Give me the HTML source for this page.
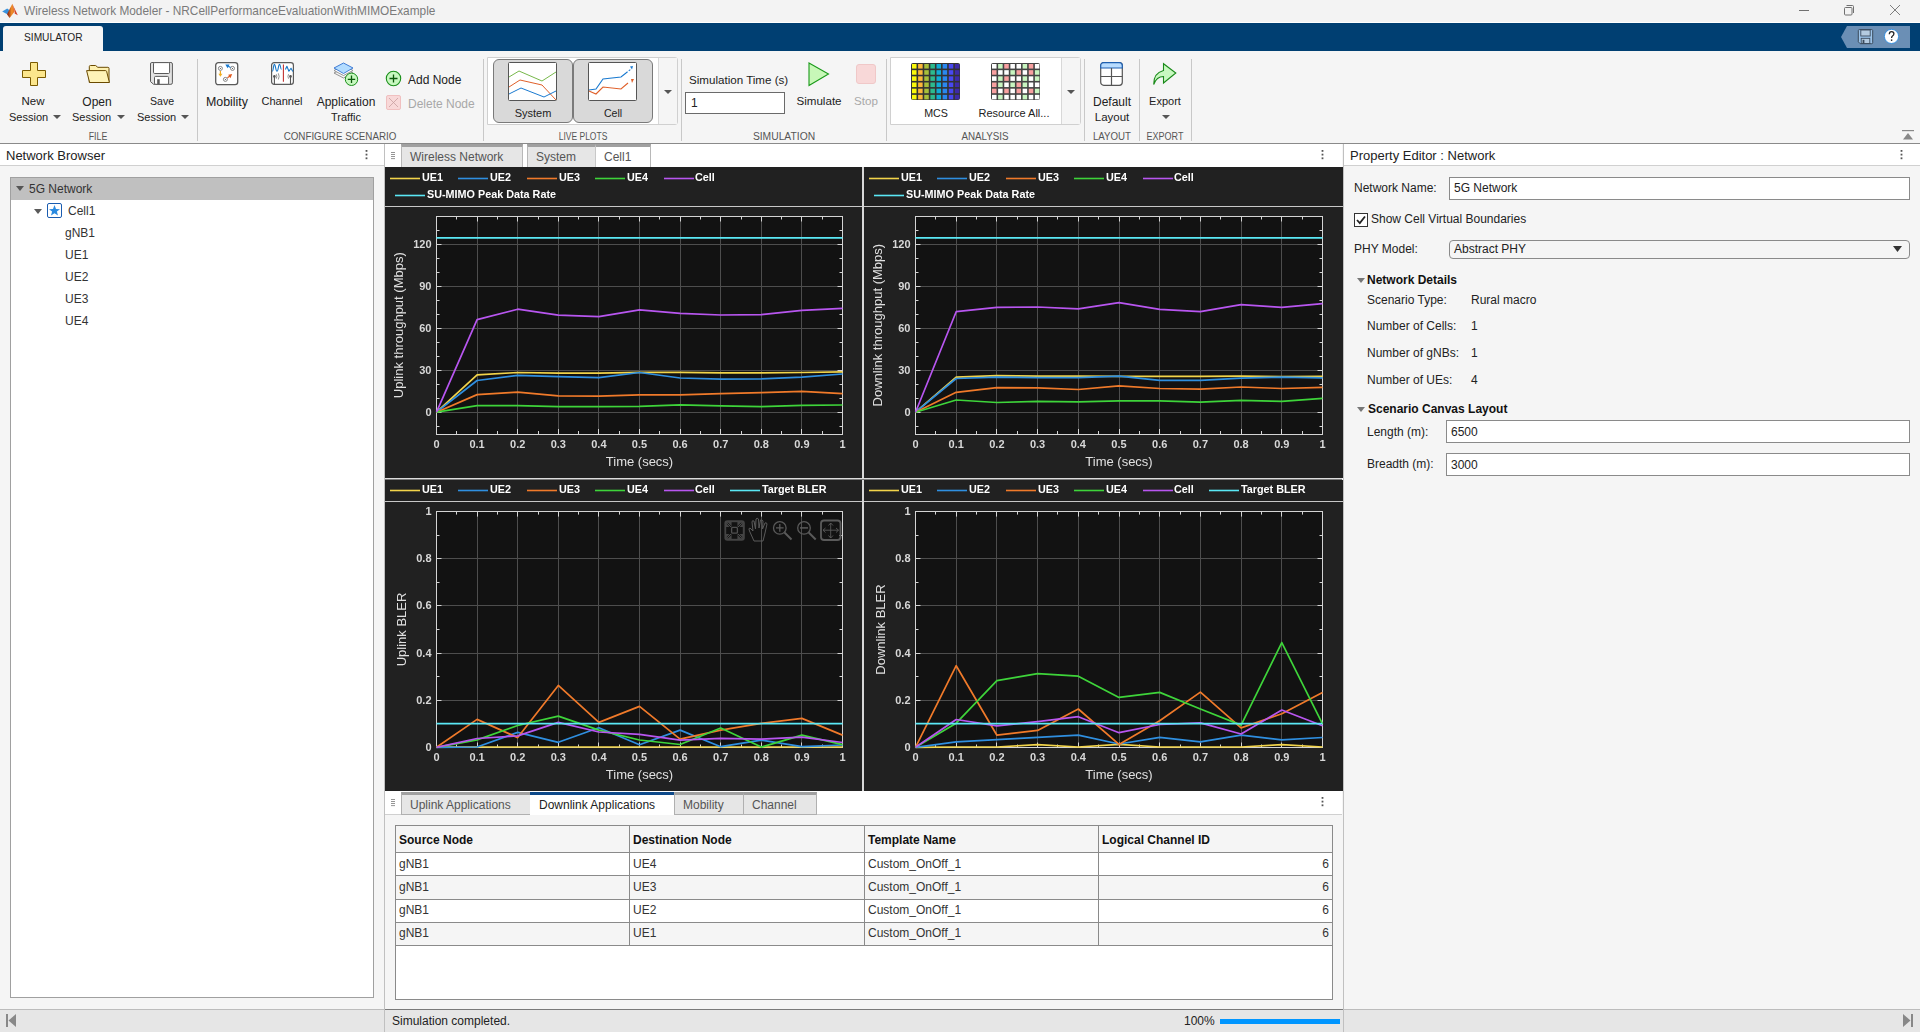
<!DOCTYPE html><html><head><meta charset="utf-8"><title>Wireless Network Modeler</title><style>
*{margin:0;padding:0;box-sizing:border-box}
html,body{width:1920px;height:1032px;overflow:hidden;background:#f5f5f5;font-family:"Liberation Sans",sans-serif}
.t{position:absolute;white-space:nowrap;line-height:1}
.b{position:absolute}
svg{position:absolute;overflow:visible}
</style></head><body>
<div class="b" style="left:0px;top:0px;width:1920px;height:23px;background:#f3f3f3"></div>
<div class="b" style="left:0px;top:22px;width:1920px;height:1px;background:#ffffff"></div>
<svg style="left:0px;top:0px" width="22" height="22" viewBox="0 0 22 22">
<defs><linearGradient id="lg1" x1="0" y1="0" x2="1" y2="0"><stop offset="0" stop-color="#7a1410"/><stop offset="0.6" stop-color="#f0902a"/><stop offset="1" stop-color="#e06a28"/></linearGradient></defs>
<path d="M2.2 11.6 L7.2 8.6 L9.8 10.5 L7.2 14.2 Z" fill="#3a92dc"/>
<path d="M7 14.2 L12.3 3.8 L14.9 11.2 L9.6 18 Z" fill="url(#lg1)"/>
<path d="M12.3 3.8 L17.8 15.2 L14.6 13.4 L14.9 11.2 Z" fill="#d2402a"/>
</svg>
<div class="t " style="left:24px;top:6px;font-size:11.85px;color:#7a7a7a;font-weight:normal;">Wireless Network Modeler - NRCellPerformanceEvaluationWithMIMOExample</div>
<div class="b" style="left:1799px;top:10px;width:10px;height:1px;background:#707070"></div>
<svg style="left:1843px;top:4px" width="12" height="12" viewBox="0 0 12 12"><rect x="1.5" y="3.5" width="7.5" height="7.5" rx="1" fill="none" stroke="#707070"/><path d="M3.5 1.5 H9.5 Q10.5 1.5 10.5 2.5 V9" fill="none" stroke="#707070"/></svg>
<svg style="left:1889px;top:4px" width="12" height="12" viewBox="0 0 12 12"><path d="M1 1 L11 11 M11 1 L1 11" stroke="#707070" stroke-width="0.9"/></svg>
<div class="b" style="left:0px;top:23px;width:1920px;height:28px;background:#003f72"></div>
<div class="b" style="left:3px;top:26px;width:100px;height:25px;background:#f5f5f5;border-radius:3px 3px 0 0"></div>
<div class="t " style="left:24px;top:33px;font-size:10.2px;color:#222;font-weight:normal;">SIMULATOR</div>
<svg style="left:1840px;top:26px" width="72" height="22" viewBox="0 0 72 22">
<path d="M7 0 H70 V22 H7 L1 11 Z" fill="#6b8fb5"/>
<path d="M19.3 3.6 H31.7 Q32.7 3.6 32.7 4.6 V16.7 Q32.7 17.7 31.7 17.7 H20.2 L18.3 15.8 V4.6 Q18.3 3.6 19.3 3.6 Z" fill="#9cc4ea" stroke="#3a4a5c" stroke-width="1"/>
<rect x="20.8" y="4" width="9.4" height="6" fill="#b4cbe0" stroke="#3a4a5c" stroke-width="0.9"/>
<rect x="21.2" y="12.3" width="8.6" height="5.2" fill="#b4cbe0" stroke="#3a4a5c" stroke-width="0.9"/>
<rect x="22.6" y="13.8" width="1.8" height="3.6" fill="#3a4a5c"/>
<circle cx="51.5" cy="10.4" r="7.1" fill="#fff" stroke="#2a8ae0" stroke-width="0.9"/>
<path d="M49.3 8.3 Q49.3 5.6 51.6 5.6 Q53.9 5.6 53.9 7.8 Q53.9 9.2 52.5 10 Q51.6 10.6 51.6 12" fill="none" stroke="#222" stroke-width="1.3"/>
<rect x="50.9" y="13.4" width="1.4" height="1.5" fill="#222"/>
</svg>
<div class="b" style="left:0px;top:51px;width:1920px;height:92px;background:#f5f5f5"></div>
<div class="b" style="left:0px;top:143px;width:1920px;height:1px;background:#8a8a8a"></div>
<div class="b" style="left:197px;top:59px;width:1px;height:82px;background:#c8c8c8"></div>
<div class="b" style="left:483px;top:59px;width:1px;height:82px;background:#c8c8c8"></div>
<div class="b" style="left:681px;top:59px;width:1px;height:82px;background:#c8c8c8"></div>
<div class="b" style="left:886px;top:59px;width:1px;height:82px;background:#c8c8c8"></div>
<div class="b" style="left:1084px;top:59px;width:1px;height:82px;background:#c8c8c8"></div>
<div class="b" style="left:1139px;top:59px;width:1px;height:82px;background:#c8c8c8"></div>
<div class="b" style="left:1191px;top:59px;width:1px;height:82px;background:#c8c8c8"></div>
<svg style="left:22px;top:62px" width="24" height="24" viewBox="0 0 24 24">
<path d="M8.5 0.5 H15.5 V8.5 H23.5 V15.5 H15.5 V23.5 H8.5 V15.5 H0.5 V8.5 H8.5 Z" fill="#fce68c" stroke="#7a5a00" stroke-width="1" stroke-linejoin="round"/>
</svg>
<div class="t" style="left:-167px;width:400px;text-align:center;top:96px;font-size:11.5px;color:#222">New</div>
<div class="t " style="left:9px;top:112px;font-size:11px;color:#222;font-weight:normal;">Session</div>
<svg style="left:53px;top:115px" width="8" height="4" viewBox="0 0 8 4"><path d="M0 0 H8 L4.0 4 Z" fill="#555"/></svg>
<svg style="left:86px;top:64px" width="25" height="20" viewBox="0 0 25 20">
<path d="M3.3 6.5 V2.6 Q3.3 1.5 4.4 1.5 H9.6 L11.8 3.3 H21.9 Q23 3.3 23 4.4 V18.5 H3.3 Z" fill="#fdf0b0" stroke="#6a4a00" stroke-width="1"/>
<path d="M0.6 6.6 H19.6 Q20.4 6.6 20.7 7.6 L23.4 18.5 H3.6 Z" fill="#fef3b8" stroke="#6a4a00" stroke-width="1" stroke-linejoin="round"/>
</svg>
<div class="t" style="left:-103px;width:400px;text-align:center;top:96px;font-size:12px;color:#222">Open</div>
<div class="t " style="left:72px;top:112px;font-size:11px;color:#222;font-weight:normal;">Session</div>
<svg style="left:117px;top:115px" width="8" height="4" viewBox="0 0 8 4"><path d="M0 0 H8 L4.0 4 Z" fill="#555"/></svg>
<svg style="left:150px;top:62px" width="24" height="24" viewBox="0 0 24 24">
<path d="M1.8 0.5 H20.9 Q22.4 0.5 22.4 2 V20.8 Q22.4 22.3 20.9 22.3 H3.6 L0.5 19.6 V2 Q0.5 0.5 1.8 0.5 Z" fill="#e2e2e2" stroke="#5a5a5a" stroke-width="1"/>
<rect x="3.5" y="0.6" width="16.1" height="10.9" rx="1.2" fill="#fff" stroke="#5a5a5a" stroke-width="1"/>
<rect x="4.5" y="14.4" width="14.1" height="7.9" rx="1.2" fill="#fff" stroke="#5a5a5a" stroke-width="1"/>
<rect x="7.2" y="17.2" width="2.5" height="5" fill="#5a5a5a"/>
</svg>
<div class="t" style="left:-38px;width:400px;text-align:center;top:96px;font-size:10.6px;color:#222">Save</div>
<div class="t " style="left:137px;top:112px;font-size:11px;color:#222;font-weight:normal;">Session</div>
<svg style="left:181px;top:115px" width="8" height="4" viewBox="0 0 8 4"><path d="M0 0 H8 L4.0 4 Z" fill="#555"/></svg>
<div class="t" style="left:-102px;width:400px;text-align:center;top:132px;font-size:10px;color:#555;transform:scaleX(0.88)">FILE</div>
<svg style="left:215px;top:62px" width="24" height="24" viewBox="0 0 24 24">
<rect x="0.7" y="0.7" width="22" height="22" rx="2.6" fill="#fff" stroke="#5a5a5a" stroke-width="1.3"/>
<circle cx="5.4" cy="6.4" r="2" fill="none" stroke="#777" stroke-width="0.9"/><circle cx="5.4" cy="6.4" r="0.5" fill="#333"/>
<circle cx="17.5" cy="6.4" r="2" fill="none" stroke="#777" stroke-width="0.9"/><circle cx="17.5" cy="6.4" r="0.5" fill="#333"/>
<circle cx="10.4" cy="17.4" r="2" fill="none" stroke="#777" stroke-width="0.9"/><circle cx="10.4" cy="17.4" r="0.5" fill="#333"/>
<path d="M5.4 9 V13" stroke="#f0a820" stroke-width="1.2"/><path d="M3.4 11.8 L5.4 14.8 L7.4 11.8 Z" fill="#f0b020"/>
<path d="M15.5 5.6 L12.5 3.8" stroke="#1a7ad0" stroke-width="1.2"/><path d="M10.3 2.6 L14.5 2.4 L12.6 6.2 Z" fill="#1a7ad0"/>
<path d="M12.4 15.8 L15 14" stroke="#e05a20" stroke-width="1.2"/><path d="M17.2 12 L13.2 12.8 L15.4 16.2 Z" fill="#e05a20"/>
</svg>
<div class="t" style="left:27px;width:400px;text-align:center;top:96px;font-size:12.4px;color:#222">Mobility</div>
<svg style="left:271px;top:62px" width="23" height="23" viewBox="0 0 23 23">
<rect x="0.6" y="0.6" width="21.8" height="21.8" rx="2.6" fill="#fff" stroke="#5a5a5a" stroke-width="1.2"/>
<path d="M1.2 9.2 C2.6 9.2 2.3 2.4 3.4 2.4 C4.6 2.4 4.6 9.2 6 9.2 C7.4 9.2 7.3 2.4 8.5 2.4 C9.7 2.4 9.4 7.5 10.5 7.5" fill="none" stroke="#1a78c8" stroke-width="1.1"/>
<path d="M14.4 7.5 L15.9 4.3 L17.9 9.2 L20 6.3 L21.8 9.5" fill="none" stroke="#1a78c8" stroke-width="1.1" stroke-linejoin="round"/>
<path d="M12.4 2.4 V19.7" stroke="#c03030" stroke-width="1.1"/>
<path d="M3.4 14.4 V22.5 M19.5 14.4 V22.5" stroke="#555" stroke-width="1.1"/>
<circle cx="3.4" cy="14.4" r="1.3" fill="#555"/><circle cx="19.5" cy="14.4" r="1.3" fill="#555"/>
<path d="M5.3 12.2 Q6.4 14.4 5.3 16.7 M7.3 11.3 Q9 14.4 7.3 17.5 M17.5 12.2 Q16.4 14.4 17.5 16.7" fill="none" stroke="#777" stroke-width="0.8"/>
</svg>
<div class="t" style="left:82px;width:400px;text-align:center;top:96px;font-size:11px;color:#222">Channel</div>
<svg style="left:333px;top:61px" width="26" height="26" viewBox="0 0 26 26">
<path d="M1 12 L10.5 7 L20 12 L10.5 17 Z" fill="none" stroke="#888" stroke-width="0.9"/>
<path d="M1 9.5 L10.5 4.5 L20 9.5 L10.5 14.5 Z" fill="#fff" stroke="#888" stroke-width="0.9"/>
<path d="M1 7 L10.5 2 L20 7 L10.5 12.5 Z" fill="#b3dcff" stroke="#2f6fd0" stroke-width="0.9"/>
<circle cx="18.5" cy="18.3" r="6.2" fill="#c8f8c0" stroke="#1a8f1a" stroke-width="1"/>
<path d="M18.5 14.5 V22 M14.8 18.3 H22.2" stroke="#0a5a0a" stroke-width="1.3"/>
</svg>
<div class="t" style="left:146px;width:400px;text-align:center;top:96px;font-size:12px;color:#222">Application</div>
<div class="t" style="left:146px;width:400px;text-align:center;top:112px;font-size:11px;color:#222">Traffic</div>
<svg style="left:385px;top:70px" width="17" height="17" viewBox="0 0 17 17">
<circle cx="8.5" cy="8.5" r="7.2" fill="#c8f8c0" stroke="#1a8f1a" stroke-width="1.1"/>
<path d="M8.5 4.5 V12.5 M4.5 8.5 H12.5" stroke="#0a5a0a" stroke-width="1.3"/>
</svg>
<div class="t " style="left:408px;top:74px;font-size:12px;color:#222;font-weight:normal;">Add Node</div>
<svg style="left:386px;top:95px" width="15" height="15" viewBox="0 0 15 15">
<rect x="0.5" y="0.5" width="14" height="14" rx="1.5" fill="#f8d8d8" stroke="#f0c0c0"/>
<path d="M3 3 L12 12 M12 3 L3 12" stroke="#c8a0a0" stroke-width="0.8"/>
</svg>
<div class="t " style="left:408px;top:98px;font-size:12px;color:#a8a8a8;font-weight:normal;">Delete Node</div>
<div class="t" style="left:140px;width:400px;text-align:center;top:132px;font-size:10px;color:#555;transform:scaleX(0.98)">CONFIGURE SCENARIO</div>
<div class="b" style="left:487px;top:57px;width:191px;height:68px;background:#fff;border:1px solid #d0d0d0;border-radius:0 3px 3px 0"></div>
<div class="b" style="left:658px;top:58px;width:19px;height:66px;background:#f5f5f5;border-left:1px solid #d8d8d8"></div>
<svg style="left:664px;top:90px" width="8" height="4" viewBox="0 0 8 4"><path d="M0 0 H8 L4.0 4 Z" fill="#555"/></svg>
<div class="b" style="left:493px;top:59px;width:80px;height:64px;background:#d9d9d9;border:1px solid #7a7a7a;border-radius:6px"></div>
<div class="b" style="left:573px;top:59px;width:80px;height:64px;background:#d9d9d9;border:1px solid #7a7a7a;border-radius:6px"></div>
<svg style="left:508px;top:62px" width="49" height="39" viewBox="0 0 49 39">
<rect x="0.5" y="0.5" width="48" height="38" rx="1" fill="#fff" stroke="#555" stroke-width="1"/>
<path d="M1 15 L11 9 L34 19 L48 10" fill="none" stroke="#77b84a" stroke-width="1"/>
<path d="M1 25 L12 18 L34 23 L48 38" fill="none" stroke="#e0602a" stroke-width="1"/>
<path d="M1 32 L13 26 L36 35 L48 29" fill="none" stroke="#1a7ad0" stroke-width="1"/>
</svg>
<div class="t" style="left:333px;width:400px;text-align:center;top:108px;font-size:11px;color:#222">System</div>
<svg style="left:588px;top:62px" width="49" height="39" viewBox="0 0 49 39">
<rect x="0.5" y="0.5" width="48" height="38" rx="1" fill="#fff" stroke="#555" stroke-width="1"/>
<path d="M1 28 L8 27 L15 17 L33 15 L38 11" fill="none" stroke="#1a7ad0" stroke-width="1.1"/>
<path d="M38 11 L43 7" fill="none" stroke="#1a7ad0" stroke-width="1.1" stroke-dasharray="2 1.5"/>
<path d="M42 4.5 L45 4 L44 7.5 Z" fill="#1a7ad0"/>
<path d="M1 29 L8 32 L15 25 L33 27 L40 21" fill="none" stroke="#e0602a" stroke-width="1.1"/>
<path d="M43 17 L46 17 L44 21 Z" fill="#e0602a"/>
</svg>
<div class="t" style="left:413px;width:400px;text-align:center;top:108px;font-size:10.6px;color:#222">Cell</div>
<div class="t" style="left:383px;width:400px;text-align:center;top:132px;font-size:10px;color:#555;transform:scaleX(0.85)">LIVE PLOTS</div>
<div class="t " style="left:689px;top:74px;font-size:11.6px;color:#222;font-weight:normal;">Simulation Time (s)</div>
<div class="b" style="left:685px;top:92px;width:100px;height:22px;background:#fff;border:1px solid #6a6a6a"></div>
<div class="t " style="left:691px;top:97px;font-size:12px;color:#222;font-weight:normal;">1</div>
<svg style="left:808px;top:62px" width="22" height="25" viewBox="0 0 22 25">
<path d="M1 1 L20.5 12 L1 23.5 Z" fill="#c8f8b8" stroke="#1a9a1a" stroke-width="1.1" stroke-linejoin="miter"/>
</svg>
<div class="t" style="left:619px;width:400px;text-align:center;top:95px;font-size:11.6px;color:#222">Simulate</div>
<div class="b" style="left:856px;top:64px;width:20px;height:20px;background:#f8d8d8;border:1px solid #f0c8c8;border-radius:3px"></div>
<div class="t" style="left:666px;width:400px;text-align:center;top:95px;font-size:11.6px;color:#a8a8a8">Stop</div>
<div class="t" style="left:584px;width:400px;text-align:center;top:132px;font-size:10px;color:#555;transform:scaleX(1.03)">SIMULATION</div>
<div class="b" style="left:890px;top:57px;width:191px;height:68px;background:#fff;border:1px solid #d0d0d0;border-radius:0 3px 3px 0"></div>
<div class="b" style="left:1061px;top:58px;width:19px;height:66px;background:#f5f5f5;border-left:1px solid #d8d8d8"></div>
<svg style="left:1067px;top:90px" width="8" height="4" viewBox="0 0 8 4"><path d="M0 0 H8 L4.0 4 Z" fill="#555"/></svg>
<svg style="left:911px;top:63px" width="49" height="37" viewBox="0 0 49 37"><rect x="0" y="0" width="49" height="37" rx="2" fill="#333"/><rect x="1.00" y="1.00" width="4.53" height="4.57" fill="#f9f90a"/><rect x="1.00" y="7.17" width="4.53" height="4.57" fill="#f9f90a"/><rect x="1.00" y="13.33" width="4.53" height="4.57" fill="#f9f90a"/><rect x="1.00" y="19.50" width="4.53" height="4.57" fill="#f9f90a"/><rect x="1.00" y="25.67" width="4.53" height="4.57" fill="#f9f90a"/><rect x="1.00" y="31.83" width="4.53" height="4.57" fill="#f9f90a"/><rect x="7.12" y="1.00" width="4.53" height="4.57" fill="#fcb83a"/><rect x="7.12" y="7.17" width="4.53" height="4.57" fill="#fcb83a"/><rect x="7.12" y="13.33" width="4.53" height="4.57" fill="#fcb83a"/><rect x="7.12" y="19.50" width="4.53" height="4.57" fill="#fcb83a"/><rect x="7.12" y="25.67" width="4.53" height="4.57" fill="#fcb83a"/><rect x="7.12" y="31.83" width="4.53" height="4.57" fill="#fcb83a"/><rect x="13.25" y="1.00" width="4.53" height="4.57" fill="#a8bf3a"/><rect x="13.25" y="7.17" width="4.53" height="4.57" fill="#a8bf3a"/><rect x="13.25" y="13.33" width="4.53" height="4.57" fill="#a8bf3a"/><rect x="13.25" y="19.50" width="4.53" height="4.57" fill="#a8bf3a"/><rect x="13.25" y="25.67" width="4.53" height="4.57" fill="#a8bf3a"/><rect x="13.25" y="31.83" width="4.53" height="4.57" fill="#a8bf3a"/><rect x="19.38" y="1.00" width="4.53" height="4.57" fill="#2cba8e"/><rect x="19.38" y="7.17" width="4.53" height="4.57" fill="#2cba8e"/><rect x="19.38" y="13.33" width="4.53" height="4.57" fill="#2cba8e"/><rect x="19.38" y="19.50" width="4.53" height="4.57" fill="#2cba8e"/><rect x="19.38" y="25.67" width="4.53" height="4.57" fill="#2cba8e"/><rect x="19.38" y="31.83" width="4.53" height="4.57" fill="#2cba8e"/><rect x="25.50" y="1.00" width="4.53" height="4.57" fill="#10acd6"/><rect x="25.50" y="7.17" width="4.53" height="4.57" fill="#10acd6"/><rect x="25.50" y="13.33" width="4.53" height="4.57" fill="#10acd6"/><rect x="25.50" y="19.50" width="4.53" height="4.57" fill="#10acd6"/><rect x="25.50" y="25.67" width="4.53" height="4.57" fill="#10acd6"/><rect x="25.50" y="31.83" width="4.53" height="4.57" fill="#10acd6"/><rect x="31.62" y="1.00" width="4.53" height="4.57" fill="#2a88f0"/><rect x="31.62" y="7.17" width="4.53" height="4.57" fill="#2a88f0"/><rect x="31.62" y="13.33" width="4.53" height="4.57" fill="#2a88f0"/><rect x="31.62" y="19.50" width="4.53" height="4.57" fill="#2a88f0"/><rect x="31.62" y="25.67" width="4.53" height="4.57" fill="#2a88f0"/><rect x="31.62" y="31.83" width="4.53" height="4.57" fill="#2a88f0"/><rect x="37.75" y="1.00" width="4.53" height="4.57" fill="#4848f0"/><rect x="37.75" y="7.17" width="4.53" height="4.57" fill="#4848f0"/><rect x="37.75" y="13.33" width="4.53" height="4.57" fill="#4848f0"/><rect x="37.75" y="19.50" width="4.53" height="4.57" fill="#4848f0"/><rect x="37.75" y="25.67" width="4.53" height="4.57" fill="#4848f0"/><rect x="37.75" y="31.83" width="4.53" height="4.57" fill="#4848f0"/><rect x="43.88" y="1.00" width="4.53" height="4.57" fill="#3d2aa8"/><rect x="43.88" y="7.17" width="4.53" height="4.57" fill="#3d2aa8"/><rect x="43.88" y="13.33" width="4.53" height="4.57" fill="#3d2aa8"/><rect x="43.88" y="19.50" width="4.53" height="4.57" fill="#3d2aa8"/><rect x="43.88" y="25.67" width="4.53" height="4.57" fill="#3d2aa8"/><rect x="43.88" y="31.83" width="4.53" height="4.57" fill="#3d2aa8"/></svg>
<div class="t" style="left:736px;width:400px;text-align:center;top:108px;font-size:10.7px;color:#222">MCS</div>
<svg style="left:991px;top:63px" width="49" height="37" viewBox="0 0 49 37"><rect x="0" y="0" width="49" height="37" rx="2" fill="#444"/><rect x="1.00" y="1.00" width="4.53" height="4.57" fill="#ffffff"/><rect x="7.12" y="1.00" width="4.53" height="4.57" fill="#c8f5c0"/><rect x="13.25" y="1.00" width="4.53" height="4.57" fill="#f8a0a0"/><rect x="19.38" y="1.00" width="4.53" height="4.57" fill="#ffffff"/><rect x="25.50" y="1.00" width="4.53" height="4.57" fill="#ffffff"/><rect x="31.62" y="1.00" width="4.53" height="4.57" fill="#c8f5c0"/><rect x="37.75" y="1.00" width="4.53" height="4.57" fill="#f8a0a0"/><rect x="43.88" y="1.00" width="4.53" height="4.57" fill="#ffffff"/><rect x="1.00" y="7.17" width="4.53" height="4.57" fill="#f8a0a0"/><rect x="7.12" y="7.17" width="4.53" height="4.57" fill="#ffffff"/><rect x="13.25" y="7.17" width="4.53" height="4.57" fill="#ffffff"/><rect x="19.38" y="7.17" width="4.53" height="4.57" fill="#c8f5c0"/><rect x="25.50" y="7.17" width="4.53" height="4.57" fill="#f8a0a0"/><rect x="31.62" y="7.17" width="4.53" height="4.57" fill="#ffffff"/><rect x="37.75" y="7.17" width="4.53" height="4.57" fill="#f8a0a0"/><rect x="43.88" y="7.17" width="4.53" height="4.57" fill="#c8f5c0"/><rect x="1.00" y="13.33" width="4.53" height="4.57" fill="#ffffff"/><rect x="7.12" y="13.33" width="4.53" height="4.57" fill="#c8f5c0"/><rect x="13.25" y="13.33" width="4.53" height="4.57" fill="#f8a0a0"/><rect x="19.38" y="13.33" width="4.53" height="4.57" fill="#ffffff"/><rect x="25.50" y="13.33" width="4.53" height="4.57" fill="#ffffff"/><rect x="31.62" y="13.33" width="4.53" height="4.57" fill="#c8f5c0"/><rect x="37.75" y="13.33" width="4.53" height="4.57" fill="#ffffff"/><rect x="43.88" y="13.33" width="4.53" height="4.57" fill="#c8f5c0"/><rect x="1.00" y="19.50" width="4.53" height="4.57" fill="#f8a0a0"/><rect x="7.12" y="19.50" width="4.53" height="4.57" fill="#c8f5c0"/><rect x="13.25" y="19.50" width="4.53" height="4.57" fill="#ffffff"/><rect x="19.38" y="19.50" width="4.53" height="4.57" fill="#c8f5c0"/><rect x="25.50" y="19.50" width="4.53" height="4.57" fill="#f8a0a0"/><rect x="31.62" y="19.50" width="4.53" height="4.57" fill="#c8f5c0"/><rect x="37.75" y="19.50" width="4.53" height="4.57" fill="#ffffff"/><rect x="43.88" y="19.50" width="4.53" height="4.57" fill="#ffffff"/><rect x="1.00" y="25.67" width="4.53" height="4.57" fill="#f8a0a0"/><rect x="7.12" y="25.67" width="4.53" height="4.57" fill="#ffffff"/><rect x="13.25" y="25.67" width="4.53" height="4.57" fill="#f8a0a0"/><rect x="19.38" y="25.67" width="4.53" height="4.57" fill="#ffffff"/><rect x="25.50" y="25.67" width="4.53" height="4.57" fill="#f8a0a0"/><rect x="31.62" y="25.67" width="4.53" height="4.57" fill="#ffffff"/><rect x="37.75" y="25.67" width="4.53" height="4.57" fill="#f8a0a0"/><rect x="43.88" y="25.67" width="4.53" height="4.57" fill="#c8f5c0"/><rect x="1.00" y="31.83" width="4.53" height="4.57" fill="#ffffff"/><rect x="7.12" y="31.83" width="4.53" height="4.57" fill="#c8f5c0"/><rect x="13.25" y="31.83" width="4.53" height="4.57" fill="#ffffff"/><rect x="19.38" y="31.83" width="4.53" height="4.57" fill="#ffffff"/><rect x="25.50" y="31.83" width="4.53" height="4.57" fill="#ffffff"/><rect x="31.62" y="31.83" width="4.53" height="4.57" fill="#c8f5c0"/><rect x="37.75" y="31.83" width="4.53" height="4.57" fill="#ffffff"/><rect x="43.88" y="31.83" width="4.53" height="4.57" fill="#ffffff"/></svg>
<div class="t" style="left:814px;width:400px;text-align:center;top:108px;font-size:11px;color:#222">Resource All...</div>
<div class="t" style="left:785px;width:400px;text-align:center;top:132px;font-size:10px;color:#555;transform:scaleX(0.98)">ANALYSIS</div>
<svg style="left:1100px;top:62px" width="24" height="24" viewBox="0 0 24 24">
<rect x="0.7" y="0.7" width="21.6" height="22.6" rx="3" fill="#fff" stroke="#555" stroke-width="1.2"/>
<path d="M0.7 6 V3.7 Q0.7 0.7 3.7 0.7 H19.3 Q22.3 0.7 22.3 3.7 V6 Z" fill="#b8dcff" stroke="#1f5fb0" stroke-width="1.2"/>
<path d="M11.5 6 V23 M0.7 14.5 H22.3" stroke="#555" stroke-width="1.2"/>
</svg>
<div class="t" style="left:912px;width:400px;text-align:center;top:96px;font-size:12px;color:#222">Default</div>
<div class="t" style="left:912px;width:400px;text-align:center;top:112px;font-size:11.5px;color:#222">Layout</div>
<div class="t" style="left:912px;width:400px;text-align:center;top:132px;font-size:10px;color:#555;transform:scaleX(0.97)">LAYOUT</div>
<svg style="left:1153px;top:63px" width="25" height="23" viewBox="0 0 25 23">
<path d="M0.7 21.5 Q0.5 10 10.5 7.5 V0.7 L22.8 10 L10.5 20 V13.5 Q3.5 13.5 0.7 21.5 Z" fill="#c8f8c0" stroke="#1a8a1a" stroke-width="1.1" stroke-linejoin="miter"/>
</svg>
<div class="t" style="left:965px;width:400px;text-align:center;top:96px;font-size:11px;color:#222">Export</div>
<svg style="left:1162px;top:115px" width="8" height="4" viewBox="0 0 8 4"><path d="M0 0 H8 L4.0 4 Z" fill="#555"/></svg>
<div class="t" style="left:965px;width:400px;text-align:center;top:132px;font-size:10px;color:#555;transform:scaleX(0.9)">EXPORT</div>
<svg style="left:1902px;top:130px" width="12" height="10" viewBox="0 0 12 10"><rect x="0" y="0" width="12" height="1.2" fill="#888"/><path d="M1 9.5 L6 3 L11 9.5 Z" fill="#888"/></svg>
<div class="b" style="left:0px;top:144px;width:384px;height:866px;background:#f5f5f5"></div>
<div class="b" style="left:0px;top:144px;width:384px;height:22px;background:#fff;border-bottom:1px solid #d0d0d0"></div>
<div class="b" style="left:384px;top:144px;width:1px;height:866px;background:#c0c0c0"></div>
<div class="t" style="left:6px;top:149px;font-size:13px;color:#222;font-weight:normal;">Network Browser</div>
<svg style="left:365px;top:150px" width="3" height="10" viewBox="0 0 3 10"><rect x="0.6" y="0" width="1.8" height="1.8" fill="#555"/><rect x="0.6" y="3.7" width="1.8" height="1.8" fill="#555"/><rect x="0.6" y="7.4" width="1.8" height="1.8" fill="#555"/></svg>
<div class="b" style="left:10px;top:177px;width:364px;height:821px;background:#fff;border:1px solid #a0a0a0"></div>
<div class="b" style="left:11px;top:178px;width:362px;height:22px;background:#c0c0c0"></div>
<svg style="left:16px;top:186px" width="8" height="5" viewBox="0 0 8 5"><path d="M0 0 H8 L4 5 Z" fill="#555"/></svg>
<div class="t" style="left:29px;top:183px;font-size:12px;color:#333;font-weight:normal;">5G Network</div>
<svg style="left:34px;top:209px" width="8" height="5" viewBox="0 0 8 5"><path d="M0 0 H8 L4 5 Z" fill="#5a5a5a"/></svg>
<svg style="left:47px;top:203px" width="15" height="15" viewBox="0 0 15 15">
<rect x="0.5" y="0.5" width="14" height="14" rx="1.5" fill="#fff" stroke="#1a5cb0" stroke-width="1"/>
<path d="M7.5 2 L9 6 L13 6.2 L9.9 8.6 L11 12.6 L7.5 10.3 L4 12.6 L5.1 8.6 L2 6.2 L6 6 Z" fill="#2a8ae0"/>
</svg>
<div class="t" style="left:68px;top:205px;font-size:12px;color:#333;font-weight:normal;">Cell1</div>
<div class="t" style="left:65px;top:227px;font-size:12px;color:#333;font-weight:normal;">gNB1</div>
<div class="t" style="left:65px;top:249px;font-size:12px;color:#333;font-weight:normal;">UE1</div>
<div class="t" style="left:65px;top:271px;font-size:12px;color:#333;font-weight:normal;">UE2</div>
<div class="t" style="left:65px;top:293px;font-size:12px;color:#333;font-weight:normal;">UE3</div>
<div class="t" style="left:65px;top:315px;font-size:12px;color:#333;font-weight:normal;">UE4</div>
<div class="b" style="left:0px;top:1009px;width:1920px;height:23px;background:#e6e6e6;border-top:1px solid #bcbcbc"></div>
<div class="b" style="left:385px;top:1009px;width:958px;height:1px;background:#7a7a7a"></div>
<svg style="left:6px;top:1014px" width="10" height="13" viewBox="0 0 10 13"><rect x="0" y="0" width="2" height="13" fill="#888"/><path d="M10 0 V13 L2.5 6.5 Z" fill="#888"/></svg>
<div class="b" style="left:384px;top:1009px;width:1px;height:23px;background:#c0c0c0"></div>
<div class="b" style="left:1343px;top:1009px;width:1px;height:23px;background:#c0c0c0"></div>
<svg style="left:1903px;top:1014px" width="10" height="13" viewBox="0 0 10 13"><rect x="8" y="0" width="2" height="13" fill="#888"/><path d="M0 0 V13 L7.5 6.5 Z" fill="#888"/></svg>
<div class="t" style="left:392px;top:1015px;font-size:12px;color:#222;font-weight:normal;">Simulation completed.</div>
<div class="t" style="left:1184px;top:1015px;font-size:12px;color:#222;font-weight:normal;">100%</div>
<div class="b" style="left:1220px;top:1019px;width:120px;height:5px;background:#0096ff"></div>
<div class="b" style="left:385px;top:144px;width:957px;height:23px;background:#fff"></div>
<svg style="left:391px;top:152px" width="4" height="8" viewBox="0 0 4 8"><rect x="0" y="0" width="4" height="0.9" fill="#8a8a8a"/><rect x="0" y="2" width="4" height="0.9" fill="#8a8a8a"/><rect x="0" y="4" width="4" height="0.9" fill="#8a8a8a"/><rect x="0" y="6.2" width="4" height="0.9" fill="#8a8a8a"/></svg>
<div class="b" style="left:401px;top:144px;width:122px;height:23px;background:#e6e6e6;border-top:3px solid #a0a0a0;border-right:1px solid #b8b8b8;border-left:1px solid #b8b8b8"></div>
<div class="t" style="left:410px;top:151px;font-size:12px;color:#555;font-weight:normal;">Wireless Network</div>
<div class="b" style="left:527px;top:144px;width:68px;height:23px;background:#e6e6e6;border-top:3px solid #a0a0a0;border-left:1px solid #b8b8b8"></div>
<div class="t" style="left:536px;top:151px;font-size:12px;color:#555;font-weight:normal;">System</div>
<div class="b" style="left:595px;top:144px;width:56px;height:23px;background:#fff;border-top:3px solid #a0a0a0;border-left:1px solid #c8c8c8;border-right:1px solid #b8b8b8"></div>
<div class="t" style="left:604px;top:151px;font-size:12px;color:#555;font-weight:normal;">Cell1</div>
<svg style="left:1321px;top:150px" width="3" height="10" viewBox="0 0 3 10"><rect x="0.6" y="0" width="1.8" height="1.8" fill="#555"/><rect x="0.6" y="3.7" width="1.8" height="1.8" fill="#555"/><rect x="0.6" y="7.4" width="1.8" height="1.8" fill="#555"/></svg>
<svg style="left:385px;top:167px;will-change:transform" width="477" height="311" viewBox="385 167 477 311">
<rect x="385" y="167" width="477" height="311" fill="#212121"/>
<path d="M390 178.5 H420" stroke="#f2d44a" stroke-width="1.6"/>
<text x="422" y="181.2" font-family="Liberation Sans" font-weight="bold" font-size="10.8" fill="#ffffff">UE1</text>
<path d="M458 178.5 H488" stroke="#2f8fe0" stroke-width="1.6"/>
<text x="490" y="181.2" font-family="Liberation Sans" font-weight="bold" font-size="10.8" fill="#ffffff">UE2</text>
<path d="M527 178.5 H557" stroke="#f07a2a" stroke-width="1.6"/>
<text x="559" y="181.2" font-family="Liberation Sans" font-weight="bold" font-size="10.8" fill="#ffffff">UE3</text>
<path d="M595 178.5 H625" stroke="#3ed43a" stroke-width="1.6"/>
<text x="627" y="181.2" font-family="Liberation Sans" font-weight="bold" font-size="10.8" fill="#ffffff">UE4</text>
<path d="M664 178.5 H694" stroke="#b856f0" stroke-width="1.6"/>
<text x="695" y="181.2" font-family="Liberation Sans" font-weight="bold" font-size="10.8" fill="#ffffff">Cell</text>
<path d="M395 195.5 H425" stroke="#5ae8f5" stroke-width="1.6"/>
<text x="427" y="198.2" font-family="Liberation Sans" font-weight="bold" font-size="10.8" fill="#ffffff">SU-MIMO Peak Data Rate</text>
<path d="M385 206.5 H862" stroke="#c8c8c8" stroke-width="1.2"/>
<rect x="436.5" y="216.5" width="406.0" height="217.5" fill="#121212"/>
<path d="M477.5 216.5 V434.0 M517.5 216.5 V434.0 M558.5 216.5 V434.0 M598.5 216.5 V434.0 M639.5 216.5 V434.0 M680.5 216.5 V434.0 M720.5 216.5 V434.0 M761.5 216.5 V434.0 M801.5 216.5 V434.0 M436.5 412.5 H842.5 M436.5 370.5 H842.5 M436.5 328.5 H842.5 M436.5 286.5 H842.5 M436.5 244.5 H842.5" stroke="#4d4d4d" stroke-width="1"/>
<path d="M436.5 434.0 V429.0 M436.5 216.5 V221.5 M456.5 434.0 V431.0 M456.5 216.5 V219.5 M477.5 434.0 V429.0 M477.5 216.5 V221.5 M497.5 434.0 V431.0 M497.5 216.5 V219.5 M517.5 434.0 V429.0 M517.5 216.5 V221.5 M538.5 434.0 V431.0 M538.5 216.5 V219.5 M558.5 434.0 V429.0 M558.5 216.5 V221.5 M578.5 434.0 V431.0 M578.5 216.5 V219.5 M598.5 434.0 V429.0 M598.5 216.5 V221.5 M619.5 434.0 V431.0 M619.5 216.5 V219.5 M639.5 434.0 V429.0 M639.5 216.5 V221.5 M659.5 434.0 V431.0 M659.5 216.5 V219.5 M680.5 434.0 V429.0 M680.5 216.5 V221.5 M700.5 434.0 V431.0 M700.5 216.5 V219.5 M720.5 434.0 V429.0 M720.5 216.5 V221.5 M741.5 434.0 V431.0 M741.5 216.5 V219.5 M761.5 434.0 V429.0 M761.5 216.5 V221.5 M781.5 434.0 V431.0 M781.5 216.5 V219.5 M801.5 434.0 V429.0 M801.5 216.5 V221.5 M822.5 434.0 V431.0 M822.5 216.5 V219.5 M842.5 434.0 V429.0 M842.5 216.5 V221.5 M436.5 426.5 H439.5 M842.5 426.5 H839.5 M436.5 412.5 H441.5 M842.5 412.5 H837.5 M436.5 398.5 H439.5 M842.5 398.5 H839.5 M436.5 384.5 H439.5 M842.5 384.5 H839.5 M436.5 370.5 H441.5 M842.5 370.5 H837.5 M436.5 356.5 H439.5 M842.5 356.5 H839.5 M436.5 342.5 H439.5 M842.5 342.5 H839.5 M436.5 328.5 H441.5 M842.5 328.5 H837.5 M436.5 314.5 H439.5 M842.5 314.5 H839.5 M436.5 300.5 H439.5 M842.5 300.5 H839.5 M436.5 286.5 H441.5 M842.5 286.5 H837.5 M436.5 272.5 H439.5 M842.5 272.5 H839.5 M436.5 258.5 H439.5 M842.5 258.5 H839.5 M436.5 244.5 H441.5 M842.5 244.5 H837.5 M436.5 230.5 H439.5 M842.5 230.5 H839.5" stroke="#d4d4d4" stroke-width="1"/>
<rect x="436.5" y="216.5" width="406.0" height="218.0" fill="none" stroke="#d4d4d4" stroke-width="1"/>
<path d="M436.5 412.2 L477.1 374.8 L517.7 372.5 L558.3 373.2 L598.9 373.2 L639.5 372.4 L680.1 372.4 L720.7 372.8 L761.3 372.8 L801.9 372.5 L842.5 371.9" fill="none" stroke="#f2d44a" stroke-width="1.7" stroke-linejoin="round"/>
<path d="M436.5 412.2 L477.1 380.5 L517.7 375.4 L558.3 376.6 L598.9 377.6 L639.5 372.5 L680.1 378.0 L720.7 379.2 L761.3 378.8 L801.9 377.2 L842.5 374.0" fill="none" stroke="#2f8fe0" stroke-width="1.7" stroke-linejoin="round"/>
<path d="M436.5 412.2 L477.1 394.6 L517.7 392.1 L558.3 395.8 L598.9 396.1 L639.5 394.9 L680.1 394.8 L720.7 393.6 L761.3 392.7 L801.9 391.4 L842.5 393.6" fill="none" stroke="#f07a2a" stroke-width="1.7" stroke-linejoin="round"/>
<path d="M436.5 412.2 L477.1 405.7 L517.7 405.7 L558.3 406.6 L598.9 406.6 L639.5 406.4 L680.1 404.9 L720.7 405.9 L761.3 406.6 L801.9 405.3 L842.5 405.0" fill="none" stroke="#3ed43a" stroke-width="1.7" stroke-linejoin="round"/>
<path d="M436.5 412.2 L477.1 319.6 L517.7 309.2 L558.3 315.2 L598.9 316.6 L639.5 309.9 L680.1 313.3 L720.7 315.0 L761.3 314.6 L801.9 310.4 L842.5 308.3" fill="none" stroke="#b856f0" stroke-width="1.7" stroke-linejoin="round"/>
<path d="M436.5 237.8 H842.5" stroke="#5ae8f5" stroke-width="1.7"/>
<text x="436.5" y="448" font-family="Liberation Sans" font-weight="bold" font-size="11" fill="#d8d8d8" text-anchor="middle">0</text>
<text x="477.1" y="448" font-family="Liberation Sans" font-weight="bold" font-size="11" fill="#d8d8d8" text-anchor="middle">0.1</text>
<text x="517.7" y="448" font-family="Liberation Sans" font-weight="bold" font-size="11" fill="#d8d8d8" text-anchor="middle">0.2</text>
<text x="558.3" y="448" font-family="Liberation Sans" font-weight="bold" font-size="11" fill="#d8d8d8" text-anchor="middle">0.3</text>
<text x="598.9" y="448" font-family="Liberation Sans" font-weight="bold" font-size="11" fill="#d8d8d8" text-anchor="middle">0.4</text>
<text x="639.5" y="448" font-family="Liberation Sans" font-weight="bold" font-size="11" fill="#d8d8d8" text-anchor="middle">0.5</text>
<text x="680.1" y="448" font-family="Liberation Sans" font-weight="bold" font-size="11" fill="#d8d8d8" text-anchor="middle">0.6</text>
<text x="720.7" y="448" font-family="Liberation Sans" font-weight="bold" font-size="11" fill="#d8d8d8" text-anchor="middle">0.7</text>
<text x="761.3" y="448" font-family="Liberation Sans" font-weight="bold" font-size="11" fill="#d8d8d8" text-anchor="middle">0.8</text>
<text x="801.9" y="448" font-family="Liberation Sans" font-weight="bold" font-size="11" fill="#d8d8d8" text-anchor="middle">0.9</text>
<text x="842.5" y="448" font-family="Liberation Sans" font-weight="bold" font-size="11" fill="#d8d8d8" text-anchor="middle">1</text>
<text x="431.5" y="416" font-family="Liberation Sans" font-weight="bold" font-size="11" fill="#d8d8d8" text-anchor="end">0</text>
<text x="431.5" y="374" font-family="Liberation Sans" font-weight="bold" font-size="11" fill="#d8d8d8" text-anchor="end">30</text>
<text x="431.5" y="332" font-family="Liberation Sans" font-weight="bold" font-size="11" fill="#d8d8d8" text-anchor="end">60</text>
<text x="431.5" y="290" font-family="Liberation Sans" font-weight="bold" font-size="11" fill="#d8d8d8" text-anchor="end">90</text>
<text x="431.5" y="248" font-family="Liberation Sans" font-weight="bold" font-size="11" fill="#d8d8d8" text-anchor="end">120</text>
<text x="639.5" y="466" font-family="Liberation Sans" font-size="13" fill="#e0e0e0" text-anchor="middle">Time (secs)</text>
<text x="0" y="0" transform="translate(403,325.2) rotate(-90)" font-family="Liberation Sans" font-size="13" fill="#e0e0e0" text-anchor="middle">Uplink throughput (Mbps)</text>
</svg>
<div class="b" style="left:862px;top:167px;width:2px;height:624px;background:#d8d8d8"></div>
<svg style="left:864px;top:167px;will-change:transform" width="479" height="311" viewBox="864 167 479 311">
<rect x="864" y="167" width="479" height="311" fill="#212121"/>
<path d="M869 178.5 H899" stroke="#f2d44a" stroke-width="1.6"/>
<text x="901" y="181.2" font-family="Liberation Sans" font-weight="bold" font-size="10.8" fill="#ffffff">UE1</text>
<path d="M937 178.5 H967" stroke="#2f8fe0" stroke-width="1.6"/>
<text x="969" y="181.2" font-family="Liberation Sans" font-weight="bold" font-size="10.8" fill="#ffffff">UE2</text>
<path d="M1006 178.5 H1036" stroke="#f07a2a" stroke-width="1.6"/>
<text x="1038" y="181.2" font-family="Liberation Sans" font-weight="bold" font-size="10.8" fill="#ffffff">UE3</text>
<path d="M1074 178.5 H1104" stroke="#3ed43a" stroke-width="1.6"/>
<text x="1106" y="181.2" font-family="Liberation Sans" font-weight="bold" font-size="10.8" fill="#ffffff">UE4</text>
<path d="M1143 178.5 H1173" stroke="#b856f0" stroke-width="1.6"/>
<text x="1174" y="181.2" font-family="Liberation Sans" font-weight="bold" font-size="10.8" fill="#ffffff">Cell</text>
<path d="M874 195.5 H904" stroke="#5ae8f5" stroke-width="1.6"/>
<text x="906" y="198.2" font-family="Liberation Sans" font-weight="bold" font-size="10.8" fill="#ffffff">SU-MIMO Peak Data Rate</text>
<path d="M864 206.5 H1343" stroke="#c8c8c8" stroke-width="1.2"/>
<rect x="915.5" y="216.5" width="407.0" height="217.5" fill="#121212"/>
<path d="M956.5 216.5 V434.0 M996.5 216.5 V434.0 M1037.5 216.5 V434.0 M1078.5 216.5 V434.0 M1119.5 216.5 V434.0 M1159.5 216.5 V434.0 M1200.5 216.5 V434.0 M1241.5 216.5 V434.0 M1281.5 216.5 V434.0 M915.5 412.5 H1322.5 M915.5 370.5 H1322.5 M915.5 328.5 H1322.5 M915.5 286.5 H1322.5 M915.5 244.5 H1322.5" stroke="#4d4d4d" stroke-width="1"/>
<path d="M915.5 434.0 V429.0 M915.5 216.5 V221.5 M935.5 434.0 V431.0 M935.5 216.5 V219.5 M956.5 434.0 V429.0 M956.5 216.5 V221.5 M976.5 434.0 V431.0 M976.5 216.5 V219.5 M996.5 434.0 V429.0 M996.5 216.5 V221.5 M1017.5 434.0 V431.0 M1017.5 216.5 V219.5 M1037.5 434.0 V429.0 M1037.5 216.5 V221.5 M1057.5 434.0 V431.0 M1057.5 216.5 V219.5 M1078.5 434.0 V429.0 M1078.5 216.5 V221.5 M1098.5 434.0 V431.0 M1098.5 216.5 V219.5 M1119.5 434.0 V429.0 M1119.5 216.5 V221.5 M1139.5 434.0 V431.0 M1139.5 216.5 V219.5 M1159.5 434.0 V429.0 M1159.5 216.5 V221.5 M1180.5 434.0 V431.0 M1180.5 216.5 V219.5 M1200.5 434.0 V429.0 M1200.5 216.5 V221.5 M1220.5 434.0 V431.0 M1220.5 216.5 V219.5 M1241.5 434.0 V429.0 M1241.5 216.5 V221.5 M1261.5 434.0 V431.0 M1261.5 216.5 V219.5 M1281.5 434.0 V429.0 M1281.5 216.5 V221.5 M1302.5 434.0 V431.0 M1302.5 216.5 V219.5 M1322.5 434.0 V429.0 M1322.5 216.5 V221.5 M915.5 426.5 H918.5 M1322.5 426.5 H1319.5 M915.5 412.5 H920.5 M1322.5 412.5 H1317.5 M915.5 398.5 H918.5 M1322.5 398.5 H1319.5 M915.5 384.5 H918.5 M1322.5 384.5 H1319.5 M915.5 370.5 H920.5 M1322.5 370.5 H1317.5 M915.5 356.5 H918.5 M1322.5 356.5 H1319.5 M915.5 342.5 H918.5 M1322.5 342.5 H1319.5 M915.5 328.5 H920.5 M1322.5 328.5 H1317.5 M915.5 314.5 H918.5 M1322.5 314.5 H1319.5 M915.5 300.5 H918.5 M1322.5 300.5 H1319.5 M915.5 286.5 H920.5 M1322.5 286.5 H1317.5 M915.5 272.5 H918.5 M1322.5 272.5 H1319.5 M915.5 258.5 H918.5 M1322.5 258.5 H1319.5 M915.5 244.5 H920.5 M1322.5 244.5 H1317.5 M915.5 230.5 H918.5 M1322.5 230.5 H1319.5" stroke="#d4d4d4" stroke-width="1"/>
<rect x="915.5" y="216.5" width="407.0" height="218.0" fill="none" stroke="#d4d4d4" stroke-width="1"/>
<path d="M915.5 412.2 L956.2 377.2 L996.9 375.7 L1037.6 376.1 L1078.3 376.1 L1119.0 376.3 L1159.7 376.3 L1200.4 376.3 L1241.1 376.1 L1281.8 376.7 L1322.5 376.3" fill="none" stroke="#f2d44a" stroke-width="1.7" stroke-linejoin="round"/>
<path d="M915.5 412.2 L956.2 378.5 L996.9 377.2 L1037.6 377.6 L1078.3 377.6 L1119.0 376.2 L1159.7 380.3 L1200.4 380.3 L1241.1 378.2 L1281.8 377.2 L1322.5 377.8" fill="none" stroke="#2f8fe0" stroke-width="1.7" stroke-linejoin="round"/>
<path d="M915.5 412.2 L956.2 392.3 L996.9 387.7 L1037.6 387.9 L1078.3 389.5 L1119.0 385.8 L1159.7 388.5 L1200.4 389.2 L1241.1 387.0 L1281.8 388.5 L1322.5 387.4" fill="none" stroke="#f07a2a" stroke-width="1.7" stroke-linejoin="round"/>
<path d="M915.5 412.2 L956.2 400.0 L996.9 402.5 L1037.6 401.3 L1078.3 401.8 L1119.0 400.9 L1159.7 400.9 L1200.4 402.1 L1241.1 400.3 L1281.8 401.3 L1322.5 398.4" fill="none" stroke="#3ed43a" stroke-width="1.7" stroke-linejoin="round"/>
<path d="M915.5 412.2 L956.2 311.7 L996.9 307.3 L1037.6 307.0 L1078.3 308.9 L1119.0 302.6 L1159.7 309.3 L1200.4 311.7 L1241.1 304.7 L1281.8 307.3 L1322.5 303.6" fill="none" stroke="#b856f0" stroke-width="1.7" stroke-linejoin="round"/>
<path d="M915.5 237.8 H1322.5" stroke="#5ae8f5" stroke-width="1.7"/>
<text x="915.5" y="448" font-family="Liberation Sans" font-weight="bold" font-size="11" fill="#d8d8d8" text-anchor="middle">0</text>
<text x="956.2" y="448" font-family="Liberation Sans" font-weight="bold" font-size="11" fill="#d8d8d8" text-anchor="middle">0.1</text>
<text x="996.9" y="448" font-family="Liberation Sans" font-weight="bold" font-size="11" fill="#d8d8d8" text-anchor="middle">0.2</text>
<text x="1037.6" y="448" font-family="Liberation Sans" font-weight="bold" font-size="11" fill="#d8d8d8" text-anchor="middle">0.3</text>
<text x="1078.3" y="448" font-family="Liberation Sans" font-weight="bold" font-size="11" fill="#d8d8d8" text-anchor="middle">0.4</text>
<text x="1119.0" y="448" font-family="Liberation Sans" font-weight="bold" font-size="11" fill="#d8d8d8" text-anchor="middle">0.5</text>
<text x="1159.7" y="448" font-family="Liberation Sans" font-weight="bold" font-size="11" fill="#d8d8d8" text-anchor="middle">0.6</text>
<text x="1200.4" y="448" font-family="Liberation Sans" font-weight="bold" font-size="11" fill="#d8d8d8" text-anchor="middle">0.7</text>
<text x="1241.1" y="448" font-family="Liberation Sans" font-weight="bold" font-size="11" fill="#d8d8d8" text-anchor="middle">0.8</text>
<text x="1281.8" y="448" font-family="Liberation Sans" font-weight="bold" font-size="11" fill="#d8d8d8" text-anchor="middle">0.9</text>
<text x="1322.5" y="448" font-family="Liberation Sans" font-weight="bold" font-size="11" fill="#d8d8d8" text-anchor="middle">1</text>
<text x="910.5" y="416" font-family="Liberation Sans" font-weight="bold" font-size="11" fill="#d8d8d8" text-anchor="end">0</text>
<text x="910.5" y="374" font-family="Liberation Sans" font-weight="bold" font-size="11" fill="#d8d8d8" text-anchor="end">30</text>
<text x="910.5" y="332" font-family="Liberation Sans" font-weight="bold" font-size="11" fill="#d8d8d8" text-anchor="end">60</text>
<text x="910.5" y="290" font-family="Liberation Sans" font-weight="bold" font-size="11" fill="#d8d8d8" text-anchor="end">90</text>
<text x="910.5" y="248" font-family="Liberation Sans" font-weight="bold" font-size="11" fill="#d8d8d8" text-anchor="end">120</text>
<text x="1119.0" y="466" font-family="Liberation Sans" font-size="13" fill="#e0e0e0" text-anchor="middle">Time (secs)</text>
<text x="0" y="0" transform="translate(882,325.2) rotate(-90)" font-family="Liberation Sans" font-size="13" fill="#e0e0e0" text-anchor="middle">Downlink throughput (Mbps)</text>
</svg>
<div class="b" style="left:385px;top:478px;width:957px;height:1px;background:#dcdcdc"></div>
<div class="b" style="left:385px;top:479px;width:957px;height:1px;background:#7a7a7a"></div>
<svg style="left:385px;top:480px;will-change:transform" width="477" height="311" viewBox="385 480 477 311">
<rect x="385" y="480" width="477" height="311" fill="#212121"/>
<path d="M390 490.5 H420" stroke="#f2d44a" stroke-width="1.6"/>
<text x="422" y="493.2" font-family="Liberation Sans" font-weight="bold" font-size="10.8" fill="#ffffff">UE1</text>
<path d="M458 490.5 H488" stroke="#2f8fe0" stroke-width="1.6"/>
<text x="490" y="493.2" font-family="Liberation Sans" font-weight="bold" font-size="10.8" fill="#ffffff">UE2</text>
<path d="M527 490.5 H557" stroke="#f07a2a" stroke-width="1.6"/>
<text x="559" y="493.2" font-family="Liberation Sans" font-weight="bold" font-size="10.8" fill="#ffffff">UE3</text>
<path d="M595 490.5 H625" stroke="#3ed43a" stroke-width="1.6"/>
<text x="627" y="493.2" font-family="Liberation Sans" font-weight="bold" font-size="10.8" fill="#ffffff">UE4</text>
<path d="M664 490.5 H694" stroke="#b856f0" stroke-width="1.6"/>
<text x="695" y="493.2" font-family="Liberation Sans" font-weight="bold" font-size="10.8" fill="#ffffff">Cell</text>
<path d="M730 490.5 H760" stroke="#5ae8f5" stroke-width="1.6"/>
<text x="762" y="493.2" font-family="Liberation Sans" font-weight="bold" font-size="10.8" fill="#ffffff">Target BLER</text>
<path d="M385 501.5 H862" stroke="#c8c8c8" stroke-width="1.2"/>
<rect x="436.5" y="511.6" width="406.0" height="235.89999999999998" fill="#121212"/>
<path d="M477.5 511.6 V747.5 M517.5 511.6 V747.5 M558.5 511.6 V747.5 M598.5 511.6 V747.5 M639.5 511.6 V747.5 M680.5 511.6 V747.5 M720.5 511.6 V747.5 M761.5 511.6 V747.5 M801.5 511.6 V747.5 M436.5 700.5 H842.5 M436.5 653.5 H842.5 M436.5 605.5 H842.5 M436.5 558.5 H842.5" stroke="#4d4d4d" stroke-width="1"/>
<path d="M436.5 747.5 V742.5 M436.5 511.6 V516.6 M456.5 747.5 V744.5 M456.5 511.6 V514.6 M477.5 747.5 V742.5 M477.5 511.6 V516.6 M497.5 747.5 V744.5 M497.5 511.6 V514.6 M517.5 747.5 V742.5 M517.5 511.6 V516.6 M538.5 747.5 V744.5 M538.5 511.6 V514.6 M558.5 747.5 V742.5 M558.5 511.6 V516.6 M578.5 747.5 V744.5 M578.5 511.6 V514.6 M598.5 747.5 V742.5 M598.5 511.6 V516.6 M619.5 747.5 V744.5 M619.5 511.6 V514.6 M639.5 747.5 V742.5 M639.5 511.6 V516.6 M659.5 747.5 V744.5 M659.5 511.6 V514.6 M680.5 747.5 V742.5 M680.5 511.6 V516.6 M700.5 747.5 V744.5 M700.5 511.6 V514.6 M720.5 747.5 V742.5 M720.5 511.6 V516.6 M741.5 747.5 V744.5 M741.5 511.6 V514.6 M761.5 747.5 V742.5 M761.5 511.6 V516.6 M781.5 747.5 V744.5 M781.5 511.6 V514.6 M801.5 747.5 V742.5 M801.5 511.6 V516.6 M822.5 747.5 V744.5 M822.5 511.6 V514.6 M842.5 747.5 V742.5 M842.5 511.6 V516.6 M436.5 747.5 H441.5 M842.5 747.5 H837.5 M436.5 723.5 H439.5 M842.5 723.5 H839.5 M436.5 700.5 H441.5 M842.5 700.5 H837.5 M436.5 676.5 H439.5 M842.5 676.5 H839.5 M436.5 653.5 H441.5 M842.5 653.5 H837.5 M436.5 629.5 H439.5 M842.5 629.5 H839.5 M436.5 605.5 H441.5 M842.5 605.5 H837.5 M436.5 582.5 H439.5 M842.5 582.5 H839.5 M436.5 558.5 H441.5 M842.5 558.5 H837.5 M436.5 535.5 H439.5 M842.5 535.5 H839.5 M436.5 511.5 H441.5 M842.5 511.5 H837.5" stroke="#d4d4d4" stroke-width="1"/>
<rect x="436.5" y="511.5" width="406.0" height="236.0" fill="none" stroke="#d4d4d4" stroke-width="1"/>
<path d="M436.5 747.0 L477.1 747.0 L517.7 747.0 L558.3 747.0 L598.9 747.0 L639.5 747.0 L680.1 747.0 L720.7 747.0 L761.3 747.0 L801.9 747.0 L842.5 747.0" fill="none" stroke="#f2d44a" stroke-width="1.7" stroke-linejoin="round"/>
<path d="M436.5 747.3 L477.1 747.0 L517.7 732.4 L558.3 742.3 L598.9 727.8 L639.5 744.8 L680.1 730.1 L720.7 746.7 L761.3 740.2 L801.9 746.7 L842.5 745.0" fill="none" stroke="#2f8fe0" stroke-width="1.7" stroke-linejoin="round"/>
<path d="M436.5 747.3 L477.1 719.4 L517.7 737.6 L558.3 685.4 L598.9 722.4 L639.5 706.4 L680.1 739.1 L720.7 730.1 L761.3 723.3 L801.9 718.4 L842.5 735.1" fill="none" stroke="#f07a2a" stroke-width="1.7" stroke-linejoin="round"/>
<path d="M436.5 747.3 L477.1 739.9 L517.7 725.5 L558.3 716.1 L598.9 730.1 L639.5 740.0 L680.1 744.5 L720.7 728.0 L761.3 747.1 L801.9 735.1 L842.5 744.6" fill="none" stroke="#3ed43a" stroke-width="1.7" stroke-linejoin="round"/>
<path d="M436.5 747.3 L477.1 738.5 L517.7 735.9 L558.3 722.4 L598.9 732.0 L639.5 734.3 L680.1 740.2 L720.7 738.3 L761.3 739.1 L801.9 737.1 L842.5 742.5" fill="none" stroke="#b856f0" stroke-width="1.7" stroke-linejoin="round"/>
<path d="M436.5 723.7 H842.5" stroke="#5ae8f5" stroke-width="1.7"/>
<text x="436.5" y="761" font-family="Liberation Sans" font-weight="bold" font-size="11" fill="#d8d8d8" text-anchor="middle">0</text>
<text x="477.1" y="761" font-family="Liberation Sans" font-weight="bold" font-size="11" fill="#d8d8d8" text-anchor="middle">0.1</text>
<text x="517.7" y="761" font-family="Liberation Sans" font-weight="bold" font-size="11" fill="#d8d8d8" text-anchor="middle">0.2</text>
<text x="558.3" y="761" font-family="Liberation Sans" font-weight="bold" font-size="11" fill="#d8d8d8" text-anchor="middle">0.3</text>
<text x="598.9" y="761" font-family="Liberation Sans" font-weight="bold" font-size="11" fill="#d8d8d8" text-anchor="middle">0.4</text>
<text x="639.5" y="761" font-family="Liberation Sans" font-weight="bold" font-size="11" fill="#d8d8d8" text-anchor="middle">0.5</text>
<text x="680.1" y="761" font-family="Liberation Sans" font-weight="bold" font-size="11" fill="#d8d8d8" text-anchor="middle">0.6</text>
<text x="720.7" y="761" font-family="Liberation Sans" font-weight="bold" font-size="11" fill="#d8d8d8" text-anchor="middle">0.7</text>
<text x="761.3" y="761" font-family="Liberation Sans" font-weight="bold" font-size="11" fill="#d8d8d8" text-anchor="middle">0.8</text>
<text x="801.9" y="761" font-family="Liberation Sans" font-weight="bold" font-size="11" fill="#d8d8d8" text-anchor="middle">0.9</text>
<text x="842.5" y="761" font-family="Liberation Sans" font-weight="bold" font-size="11" fill="#d8d8d8" text-anchor="middle">1</text>
<text x="431.5" y="751" font-family="Liberation Sans" font-weight="bold" font-size="11" fill="#d8d8d8" text-anchor="end">0</text>
<text x="431.5" y="704" font-family="Liberation Sans" font-weight="bold" font-size="11" fill="#d8d8d8" text-anchor="end">0.2</text>
<text x="431.5" y="657" font-family="Liberation Sans" font-weight="bold" font-size="11" fill="#d8d8d8" text-anchor="end">0.4</text>
<text x="431.5" y="609" font-family="Liberation Sans" font-weight="bold" font-size="11" fill="#d8d8d8" text-anchor="end">0.6</text>
<text x="431.5" y="562" font-family="Liberation Sans" font-weight="bold" font-size="11" fill="#d8d8d8" text-anchor="end">0.8</text>
<text x="431.5" y="515" font-family="Liberation Sans" font-weight="bold" font-size="11" fill="#d8d8d8" text-anchor="end">1</text>
<text x="639.5" y="779" font-family="Liberation Sans" font-size="13" fill="#e0e0e0" text-anchor="middle">Time (secs)</text>
<text x="0" y="0" transform="translate(405.5,629.5) rotate(-90)" font-family="Liberation Sans" font-size="13" fill="#e0e0e0" text-anchor="middle">Uplink BLER</text>
<g stroke="#5a5a5a" fill="none" stroke-width="1.3">
<rect x="724.4" y="520.2" width="20.4" height="20.5" rx="3" fill="#444" stroke="none"/>
<rect x="726.2" y="527" width="16.6" height="7" fill="#121212" stroke="none"/>
<rect x="731.6" y="522.2" width="5.8" height="16.6" fill="#121212" stroke="none"/>
<path d="M727.2 523.2 L731 527 M741.8 523.2 L738 527 M727.2 537.8 L731 534 M741.8 537.8 L738 534" stroke="#121212" stroke-width="1.8"/>
<path d="M727.2 523.2 L731 527 M741.8 523.2 L738 527 M727.2 537.8 L731 534 M741.8 537.8 L738 534" stroke="#6a6a6a" stroke-width="0.7"/>
<rect x="731.6" y="527.4" width="5.8" height="5.8" rx="1" stroke="#505050" stroke-width="1.3"/>
<path d="M754 541 L749.5 531 Q748 528 750 528 L753 531 L752 522 Q752 520 754 521 L755.5 529 L756 519 Q757 517.5 758.5 519 L759 528 L760.5 520 Q762 519 763 521 L762.5 529 L765 523 Q766.5 522 767 524 L765 533 L763 541 Z" stroke-width="1"/>
<circle cx="779.8" cy="527.9" r="6.3"/><path d="M784.5 532.5 L791.5 539.5" stroke-width="2"/><path d="M776 527.9 H783.6 M779.8 524 V531.8" stroke-width="1.3"/>
<circle cx="804" cy="527.9" r="6.3"/><path d="M808.7 532.5 L815.7 539.5" stroke-width="2"/><path d="M800 527.9 H808" stroke-width="1.5"/>
<rect x="821" y="520.5" width="19.5" height="19.5" rx="3" stroke-width="1.8"/>
<path d="M830.7 523 V538 M823 530.2 H838.5 M828.5 525.5 L830.7 523 L833 525.5 M828.5 535.5 L830.7 538 L833 535.5 M825.5 528 L823 530.2 L825.5 532.5 M836 528 L838.5 530.2 L836 532.5" stroke-width="0.9"/>
</g>
</svg>
<svg style="left:864px;top:480px;will-change:transform" width="479" height="311" viewBox="864 480 479 311">
<rect x="864" y="480" width="479" height="311" fill="#212121"/>
<path d="M869 490.5 H899" stroke="#f2d44a" stroke-width="1.6"/>
<text x="901" y="493.2" font-family="Liberation Sans" font-weight="bold" font-size="10.8" fill="#ffffff">UE1</text>
<path d="M937 490.5 H967" stroke="#2f8fe0" stroke-width="1.6"/>
<text x="969" y="493.2" font-family="Liberation Sans" font-weight="bold" font-size="10.8" fill="#ffffff">UE2</text>
<path d="M1006 490.5 H1036" stroke="#f07a2a" stroke-width="1.6"/>
<text x="1038" y="493.2" font-family="Liberation Sans" font-weight="bold" font-size="10.8" fill="#ffffff">UE3</text>
<path d="M1074 490.5 H1104" stroke="#3ed43a" stroke-width="1.6"/>
<text x="1106" y="493.2" font-family="Liberation Sans" font-weight="bold" font-size="10.8" fill="#ffffff">UE4</text>
<path d="M1143 490.5 H1173" stroke="#b856f0" stroke-width="1.6"/>
<text x="1174" y="493.2" font-family="Liberation Sans" font-weight="bold" font-size="10.8" fill="#ffffff">Cell</text>
<path d="M1209 490.5 H1239" stroke="#5ae8f5" stroke-width="1.6"/>
<text x="1241" y="493.2" font-family="Liberation Sans" font-weight="bold" font-size="10.8" fill="#ffffff">Target BLER</text>
<path d="M864 501.5 H1343" stroke="#c8c8c8" stroke-width="1.2"/>
<rect x="915.5" y="511.6" width="407.0" height="235.89999999999998" fill="#121212"/>
<path d="M956.5 511.6 V747.5 M996.5 511.6 V747.5 M1037.5 511.6 V747.5 M1078.5 511.6 V747.5 M1119.5 511.6 V747.5 M1159.5 511.6 V747.5 M1200.5 511.6 V747.5 M1241.5 511.6 V747.5 M1281.5 511.6 V747.5 M915.5 700.5 H1322.5 M915.5 653.5 H1322.5 M915.5 605.5 H1322.5 M915.5 558.5 H1322.5" stroke="#4d4d4d" stroke-width="1"/>
<path d="M915.5 747.5 V742.5 M915.5 511.6 V516.6 M935.5 747.5 V744.5 M935.5 511.6 V514.6 M956.5 747.5 V742.5 M956.5 511.6 V516.6 M976.5 747.5 V744.5 M976.5 511.6 V514.6 M996.5 747.5 V742.5 M996.5 511.6 V516.6 M1017.5 747.5 V744.5 M1017.5 511.6 V514.6 M1037.5 747.5 V742.5 M1037.5 511.6 V516.6 M1057.5 747.5 V744.5 M1057.5 511.6 V514.6 M1078.5 747.5 V742.5 M1078.5 511.6 V516.6 M1098.5 747.5 V744.5 M1098.5 511.6 V514.6 M1119.5 747.5 V742.5 M1119.5 511.6 V516.6 M1139.5 747.5 V744.5 M1139.5 511.6 V514.6 M1159.5 747.5 V742.5 M1159.5 511.6 V516.6 M1180.5 747.5 V744.5 M1180.5 511.6 V514.6 M1200.5 747.5 V742.5 M1200.5 511.6 V516.6 M1220.5 747.5 V744.5 M1220.5 511.6 V514.6 M1241.5 747.5 V742.5 M1241.5 511.6 V516.6 M1261.5 747.5 V744.5 M1261.5 511.6 V514.6 M1281.5 747.5 V742.5 M1281.5 511.6 V516.6 M1302.5 747.5 V744.5 M1302.5 511.6 V514.6 M1322.5 747.5 V742.5 M1322.5 511.6 V516.6 M915.5 747.5 H920.5 M1322.5 747.5 H1317.5 M915.5 723.5 H918.5 M1322.5 723.5 H1319.5 M915.5 700.5 H920.5 M1322.5 700.5 H1317.5 M915.5 676.5 H918.5 M1322.5 676.5 H1319.5 M915.5 653.5 H920.5 M1322.5 653.5 H1317.5 M915.5 629.5 H918.5 M1322.5 629.5 H1319.5 M915.5 605.5 H920.5 M1322.5 605.5 H1317.5 M915.5 582.5 H918.5 M1322.5 582.5 H1319.5 M915.5 558.5 H920.5 M1322.5 558.5 H1317.5 M915.5 535.5 H918.5 M1322.5 535.5 H1319.5 M915.5 511.5 H920.5 M1322.5 511.5 H1317.5" stroke="#d4d4d4" stroke-width="1"/>
<rect x="915.5" y="511.5" width="407.0" height="236.0" fill="none" stroke="#d4d4d4" stroke-width="1"/>
<path d="M915.5 747.3 L956.2 747.0 L996.9 747.0 L1037.6 744.7 L1078.3 747.0 L1119.0 744.4 L1159.7 747.0 L1200.4 747.0 L1241.1 747.0 L1281.8 744.7 L1322.5 747.0" fill="none" stroke="#f2d44a" stroke-width="1.7" stroke-linejoin="round"/>
<path d="M915.5 747.3 L956.2 741.9 L996.9 739.6 L1037.6 737.4 L1078.3 735.2 L1119.0 744.0 L1159.7 737.4 L1200.4 741.9 L1241.1 735.2 L1281.8 739.9 L1322.5 737.5" fill="none" stroke="#2f8fe0" stroke-width="1.7" stroke-linejoin="round"/>
<path d="M915.5 747.3 L956.2 665.7 L996.9 735.2 L1037.6 730.4 L1078.3 709.0 L1119.0 744.4 L1159.7 720.7 L1200.4 692.1 L1241.1 727.9 L1281.8 713.8 L1322.5 692.6" fill="none" stroke="#f07a2a" stroke-width="1.7" stroke-linejoin="round"/>
<path d="M915.5 747.3 L956.2 723.2 L996.9 680.7 L1037.6 673.7 L1078.3 676.2 L1119.0 697.4 L1159.7 692.4 L1200.4 709.0 L1241.1 725.1 L1281.8 642.6 L1322.5 723.9" fill="none" stroke="#3ed43a" stroke-width="1.7" stroke-linejoin="round"/>
<path d="M915.5 747.3 L956.2 719.5 L996.9 725.8 L1037.6 721.6 L1078.3 716.7 L1119.0 732.7 L1159.7 724.5 L1200.4 722.9 L1241.1 734.0 L1281.8 710.0 L1322.5 725.8" fill="none" stroke="#b856f0" stroke-width="1.7" stroke-linejoin="round"/>
<path d="M915.5 723.7 H1322.5" stroke="#5ae8f5" stroke-width="1.7"/>
<text x="915.5" y="761" font-family="Liberation Sans" font-weight="bold" font-size="11" fill="#d8d8d8" text-anchor="middle">0</text>
<text x="956.2" y="761" font-family="Liberation Sans" font-weight="bold" font-size="11" fill="#d8d8d8" text-anchor="middle">0.1</text>
<text x="996.9" y="761" font-family="Liberation Sans" font-weight="bold" font-size="11" fill="#d8d8d8" text-anchor="middle">0.2</text>
<text x="1037.6" y="761" font-family="Liberation Sans" font-weight="bold" font-size="11" fill="#d8d8d8" text-anchor="middle">0.3</text>
<text x="1078.3" y="761" font-family="Liberation Sans" font-weight="bold" font-size="11" fill="#d8d8d8" text-anchor="middle">0.4</text>
<text x="1119.0" y="761" font-family="Liberation Sans" font-weight="bold" font-size="11" fill="#d8d8d8" text-anchor="middle">0.5</text>
<text x="1159.7" y="761" font-family="Liberation Sans" font-weight="bold" font-size="11" fill="#d8d8d8" text-anchor="middle">0.6</text>
<text x="1200.4" y="761" font-family="Liberation Sans" font-weight="bold" font-size="11" fill="#d8d8d8" text-anchor="middle">0.7</text>
<text x="1241.1" y="761" font-family="Liberation Sans" font-weight="bold" font-size="11" fill="#d8d8d8" text-anchor="middle">0.8</text>
<text x="1281.8" y="761" font-family="Liberation Sans" font-weight="bold" font-size="11" fill="#d8d8d8" text-anchor="middle">0.9</text>
<text x="1322.5" y="761" font-family="Liberation Sans" font-weight="bold" font-size="11" fill="#d8d8d8" text-anchor="middle">1</text>
<text x="910.5" y="751" font-family="Liberation Sans" font-weight="bold" font-size="11" fill="#d8d8d8" text-anchor="end">0</text>
<text x="910.5" y="704" font-family="Liberation Sans" font-weight="bold" font-size="11" fill="#d8d8d8" text-anchor="end">0.2</text>
<text x="910.5" y="657" font-family="Liberation Sans" font-weight="bold" font-size="11" fill="#d8d8d8" text-anchor="end">0.4</text>
<text x="910.5" y="609" font-family="Liberation Sans" font-weight="bold" font-size="11" fill="#d8d8d8" text-anchor="end">0.6</text>
<text x="910.5" y="562" font-family="Liberation Sans" font-weight="bold" font-size="11" fill="#d8d8d8" text-anchor="end">0.8</text>
<text x="910.5" y="515" font-family="Liberation Sans" font-weight="bold" font-size="11" fill="#d8d8d8" text-anchor="end">1</text>
<text x="1119.0" y="779" font-family="Liberation Sans" font-size="13" fill="#e0e0e0" text-anchor="middle">Time (secs)</text>
<text x="0" y="0" transform="translate(884.5,629.5) rotate(-90)" font-family="Liberation Sans" font-size="13" fill="#e0e0e0" text-anchor="middle">Downlink BLER</text>
</svg>
<div class="b" style="left:385px;top:791px;width:958px;height:218px;background:#f5f5f5"></div>
<div class="b" style="left:385px;top:791px;width:957px;height:24px;background:#fff;border-bottom:1px solid #d0d0d0"></div>
<svg style="left:391px;top:799px" width="4" height="8" viewBox="0 0 4 8"><rect x="0" y="0" width="4" height="0.9" fill="#8a8a8a"/><rect x="0" y="2" width="4" height="0.9" fill="#8a8a8a"/><rect x="0" y="4" width="4" height="0.9" fill="#8a8a8a"/><rect x="0" y="6.2" width="4" height="0.9" fill="#8a8a8a"/></svg>
<div class="b" style="left:401px;top:792px;width:130px;height:23px;background:#e6e6e6;border-top:3px solid #a0a0a0;border-right:1px solid #b0b0b0;border-left:1px solid #b0b0b0;border-bottom:1px solid #b0b0b0"></div>
<div class="t" style="left:410px;top:799px;font-size:12px;color:#555;font-weight:normal;">Uplink Applications</div>
<div class="b" style="left:530px;top:792px;width:145px;height:23px;background:#fff;border-top:3px solid #0e4a8a"></div>
<div class="t" style="left:539px;top:799px;font-size:12px;color:#222;font-weight:normal;">Downlink Applications</div>
<div class="b" style="left:674px;top:792px;width:70px;height:23px;background:#e6e6e6;border-top:3px solid #a0a0a0;border-right:1px solid #b0b0b0;border-left:1px solid #b0b0b0;border-bottom:1px solid #b0b0b0"></div>
<div class="t" style="left:683px;top:799px;font-size:12px;color:#555;font-weight:normal;">Mobility</div>
<div class="b" style="left:743px;top:792px;width:74px;height:23px;background:#e6e6e6;border-top:3px solid #a0a0a0;border-right:1px solid #b0b0b0;border-left:1px solid #b0b0b0;border-bottom:1px solid #b0b0b0"></div>
<div class="t" style="left:752px;top:799px;font-size:12px;color:#555;font-weight:normal;">Channel</div>
<svg style="left:1321px;top:797px" width="3" height="10" viewBox="0 0 3 10"><rect x="0.6" y="0" width="1.8" height="1.8" fill="#555"/><rect x="0.6" y="3.7" width="1.8" height="1.8" fill="#555"/><rect x="0.6" y="7.4" width="1.8" height="1.8" fill="#555"/></svg>
<div class="b" style="left:395px;top:825px;width:938px;height:175px;background:#fff;border:1px solid #8a8a8a"></div>
<div class="b" style="left:396px;top:826px;width:936px;height:26px;background:#f5f5f5"></div>
<div class="b" style="left:396px;top:852px;width:936px;height:1px;background:#8a8a8a"></div>
<div class="t" style="left:399px;top:834px;font-size:12px;color:#111;font-weight:bold;">Source Node</div>
<div class="t" style="left:633px;top:834px;font-size:12px;color:#111;font-weight:bold;">Destination Node</div>
<div class="t" style="left:868px;top:834px;font-size:12px;color:#111;font-weight:bold;">Template Name</div>
<div class="t" style="left:1102px;top:834px;font-size:12px;color:#111;font-weight:bold;">Logical Channel ID</div>
<div class="b" style="left:396px;top:853px;width:936px;height:22px;background:#fff"></div>
<div class="b" style="left:396px;top:875px;width:936px;height:1px;background:#8a8a8a"></div>
<div class="t" style="left:399px;top:858px;font-size:12px;color:#333;font-weight:normal;">gNB1</div>
<div class="t" style="left:633px;top:858px;font-size:12px;color:#333;font-weight:normal;">UE4</div>
<div class="t" style="left:868px;top:858px;font-size:12px;color:#333;font-weight:normal;">Custom_OnOff_1</div>
<div class="t" style="left:1100px;width:229px;text-align:right;top:858px;font-size:12px;color:#333">6</div>
<div class="b" style="left:396px;top:876px;width:936px;height:23px;background:#f5f5f5"></div>
<div class="b" style="left:396px;top:899px;width:936px;height:1px;background:#8a8a8a"></div>
<div class="t" style="left:399px;top:881px;font-size:12px;color:#333;font-weight:normal;">gNB1</div>
<div class="t" style="left:633px;top:881px;font-size:12px;color:#333;font-weight:normal;">UE3</div>
<div class="t" style="left:868px;top:881px;font-size:12px;color:#333;font-weight:normal;">Custom_OnOff_1</div>
<div class="t" style="left:1100px;width:229px;text-align:right;top:881px;font-size:12px;color:#333">6</div>
<div class="b" style="left:396px;top:900px;width:936px;height:22px;background:#fff"></div>
<div class="b" style="left:396px;top:922px;width:936px;height:1px;background:#8a8a8a"></div>
<div class="t" style="left:399px;top:904px;font-size:12px;color:#333;font-weight:normal;">gNB1</div>
<div class="t" style="left:633px;top:904px;font-size:12px;color:#333;font-weight:normal;">UE2</div>
<div class="t" style="left:868px;top:904px;font-size:12px;color:#333;font-weight:normal;">Custom_OnOff_1</div>
<div class="t" style="left:1100px;width:229px;text-align:right;top:904px;font-size:12px;color:#333">6</div>
<div class="b" style="left:396px;top:923px;width:936px;height:22px;background:#f5f5f5"></div>
<div class="b" style="left:396px;top:945px;width:936px;height:1px;background:#8a8a8a"></div>
<div class="t" style="left:399px;top:927px;font-size:12px;color:#333;font-weight:normal;">gNB1</div>
<div class="t" style="left:633px;top:927px;font-size:12px;color:#333;font-weight:normal;">UE1</div>
<div class="t" style="left:868px;top:927px;font-size:12px;color:#333;font-weight:normal;">Custom_OnOff_1</div>
<div class="t" style="left:1100px;width:229px;text-align:right;top:927px;font-size:12px;color:#333">6</div>
<div class="b" style="left:629px;top:826px;width:1px;height:120px;background:#8a8a8a"></div>
<div class="b" style="left:864px;top:826px;width:1px;height:120px;background:#8a8a8a"></div>
<div class="b" style="left:1098px;top:826px;width:1px;height:120px;background:#8a8a8a"></div>
<div class="b" style="left:1343px;top:144px;width:577px;height:865px;background:#f5f5f5;border-left:1px solid #c0c0c0"></div>
<div class="b" style="left:1344px;top:144px;width:576px;height:22px;background:#fff;border-bottom:1px solid #d0d0d0"></div>
<div class="t" style="left:1350px;top:149px;font-size:13px;color:#222;font-weight:normal;">Property Editor : Network</div>
<svg style="left:1900px;top:150px" width="3" height="10" viewBox="0 0 3 10"><rect x="0.6" y="0" width="1.8" height="1.8" fill="#555"/><rect x="0.6" y="3.7" width="1.8" height="1.8" fill="#555"/><rect x="0.6" y="7.4" width="1.8" height="1.8" fill="#555"/></svg>
<div class="t" style="left:1354px;top:182px;font-size:12px;color:#222;font-weight:normal;">Network Name:</div>
<div class="b" style="left:1449px;top:177px;width:461px;height:23px;background:#fff;border:1px solid #8a8a8a"></div>
<div class="t" style="left:1454px;top:182px;font-size:12px;color:#222;font-weight:normal;">5G Network</div>
<svg style="left:1354px;top:213px" width="14" height="14" viewBox="0 0 14 14">
<rect x="0.5" y="0.5" width="13" height="13" fill="#fff" stroke="#333" stroke-width="1"/>
<path d="M3 7 L5.8 10 L11 3.5" fill="none" stroke="#222" stroke-width="1.8"/>
</svg>
<div class="t" style="left:1371px;top:213px;font-size:12px;color:#222;font-weight:normal;">Show Cell Virtual Boundaries</div>
<div class="t" style="left:1354px;top:243px;font-size:12px;color:#222;font-weight:normal;">PHY Model:</div>
<div class="b" style="left:1449px;top:240px;width:461px;height:19px;background:#f5f5f5;border:1px solid #8a8a8a;border-radius:4px"></div>
<div class="t" style="left:1454px;top:243px;font-size:12px;color:#222;font-weight:normal;">Abstract PHY</div>
<svg style="left:1893px;top:246px" width="9" height="6" viewBox="0 0 9 6"><path d="M0 0 H9 L4.5 6 Z" fill="#333"/></svg>
<svg style="left:1357px;top:278px" width="8" height="5" viewBox="0 0 8 5"><path d="M0 0 H8 L4 5 Z" fill="#777"/></svg>
<div class="t" style="left:1367px;top:274px;font-size:12px;color:#111;font-weight:bold;">Network Details</div>
<div class="t" style="left:1367px;top:294px;font-size:12px;color:#222;font-weight:normal;">Scenario Type:</div>
<div class="t" style="left:1471px;top:294px;font-size:12px;color:#222;font-weight:normal;">Rural macro</div>
<div class="t" style="left:1367px;top:320px;font-size:12px;color:#222;font-weight:normal;">Number of Cells:</div>
<div class="t" style="left:1471px;top:320px;font-size:12px;color:#222;font-weight:normal;">1</div>
<div class="t" style="left:1367px;top:347px;font-size:12px;color:#222;font-weight:normal;">Number of gNBs:</div>
<div class="t" style="left:1471px;top:347px;font-size:12px;color:#222;font-weight:normal;">1</div>
<div class="t" style="left:1367px;top:374px;font-size:12px;color:#222;font-weight:normal;">Number of UEs:</div>
<div class="t" style="left:1471px;top:374px;font-size:12px;color:#222;font-weight:normal;">4</div>
<svg style="left:1357px;top:407px" width="8" height="5" viewBox="0 0 8 5"><path d="M0 0 H8 L4 5 Z" fill="#777"/></svg>
<div class="t" style="left:1368px;top:403px;font-size:12px;color:#111;font-weight:bold;">Scenario Canvas Layout</div>
<div class="t" style="left:1367px;top:426px;font-size:12px;color:#222;font-weight:normal;">Length (m):</div>
<div class="b" style="left:1446px;top:420px;width:464px;height:23px;background:#fff;border:1px solid #8a8a8a"></div>
<div class="t" style="left:1451px;top:426px;font-size:12px;color:#222;font-weight:normal;">6500</div>
<div class="t" style="left:1367px;top:458px;font-size:12px;color:#222;font-weight:normal;">Breadth (m):</div>
<div class="b" style="left:1446px;top:453px;width:464px;height:23px;background:#fff;border:1px solid #8a8a8a"></div>
<div class="t" style="left:1451px;top:459px;font-size:12px;color:#222;font-weight:normal;">3000</div>
</body></html>
